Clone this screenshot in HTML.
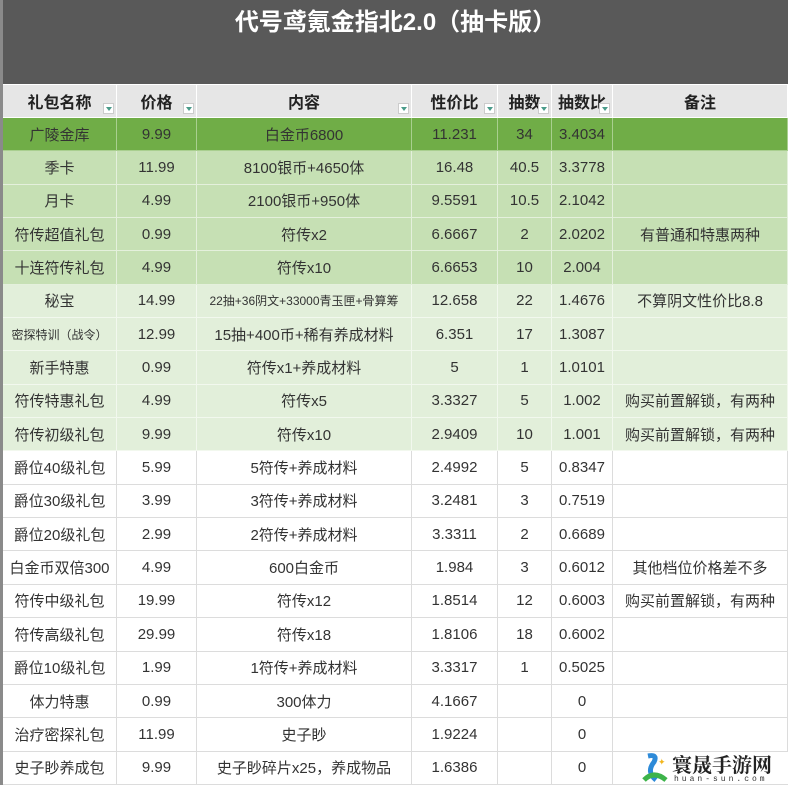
<!DOCTYPE html>
<html><head><meta charset="utf-8"><style>
*{margin:0;padding:0;box-sizing:border-box}
body{width:788px;height:784px;overflow:hidden;background:#fff;font-family:"Liberation Sans","Noto Sans CJK SC",sans-serif;position:relative}
.title{position:absolute;left:0;top:0;width:788px;height:84px;background:#595959;color:#fff;font-size:24px;font-weight:bold;text-align:center;line-height:46px;border-left:3px solid #8a8a8a}
table{position:absolute;left:0;top:84px;width:788px;border-collapse:collapse;table-layout:fixed;border-left:3px solid #8a8a8a}
td,th{border:1px solid #dcdcdc;text-align:center;font-size:15px;color:#333;white-space:nowrap;overflow:hidden;height:33.35px;padding:0;position:relative}
th{background:#e6e6e6;font-weight:bold;font-size:16px;color:#222;height:33px;border-color:#fff}
th .d{position:absolute;right:2px;bottom:3px;width:11px;height:11px;background:#fff;border:1px solid #ccc}
th .d:after{content:"";position:absolute;left:2px;top:3px;border-left:3px solid transparent;border-right:3px solid transparent;border-top:4px solid #4a9b8a}
tr.a td{background:#70ad47;border-color:#a9cf8f}
tr.b td{background:#c6e0b4;border-color:#e4f0dc}
tr.c td{background:#e2efda;border-color:#f2f8ee}
.s{font-size:12px}
.logo{position:absolute;left:640px;top:752px;width:148px;height:32px;background:#fff}
</style></head><body>
<div class="title">代号鸢氪金指北2.0（抽卡版）</div>
<table>
<colgroup><col style="width:115px"><col style="width:80px"><col style="width:215px"><col style="width:86px"><col style="width:54px"><col style="width:61px"><col></colgroup>
<tr><th>礼包名称<span class="d"></span></th><th>价格<span class="d"></span></th><th>内容<span class="d"></span></th><th>性价比<span class="d"></span></th><th>抽数<span class="d"></span></th><th>抽数比<span class="d"></span></th><th>备注</th></tr>
<tr class="a"><td>广陵金库</td><td>9.99</td><td>白金币6800</td><td>11.231</td><td>34</td><td>3.4034</td><td></td></tr>
<tr class="b"><td>季卡</td><td>11.99</td><td>8100银币+4650体</td><td>16.48</td><td>40.5</td><td>3.3778</td><td></td></tr>
<tr class="b"><td>月卡</td><td>4.99</td><td>2100银币+950体</td><td>9.5591</td><td>10.5</td><td>2.1042</td><td></td></tr>
<tr class="b"><td>符传超值礼包</td><td>0.99</td><td>符传x2</td><td>6.6667</td><td>2</td><td>2.0202</td><td>有普通和特惠两种</td></tr>
<tr class="b"><td>十连符传礼包</td><td>4.99</td><td>符传x10</td><td>6.6653</td><td>10</td><td>2.004</td><td></td></tr>
<tr class="c"><td>秘宝</td><td>14.99</td><td class="s">22抽+36阴文+33000青玉匣+骨算筹</td><td>12.658</td><td>22</td><td>1.4676</td><td>不算阴文性价比8.8</td></tr>
<tr class="c"><td class="s">密探特训（战令）</td><td>12.99</td><td>15抽+400币+稀有养成材料</td><td>6.351</td><td>17</td><td>1.3087</td><td></td></tr>
<tr class="c"><td>新手特惠</td><td>0.99</td><td>符传x1+养成材料</td><td>5</td><td>1</td><td>1.0101</td><td></td></tr>
<tr class="c"><td>符传特惠礼包</td><td>4.99</td><td>符传x5</td><td>3.3327</td><td>5</td><td>1.002</td><td>购买前置解锁，有两种</td></tr>
<tr class="c"><td>符传初级礼包</td><td>9.99</td><td>符传x10</td><td>2.9409</td><td>10</td><td>1.001</td><td>购买前置解锁，有两种</td></tr>
<tr><td>爵位40级礼包</td><td>5.99</td><td>5符传+养成材料</td><td>2.4992</td><td>5</td><td>0.8347</td><td></td></tr>
<tr><td>爵位30级礼包</td><td>3.99</td><td>3符传+养成材料</td><td>3.2481</td><td>3</td><td>0.7519</td><td></td></tr>
<tr><td>爵位20级礼包</td><td>2.99</td><td>2符传+养成材料</td><td>3.3311</td><td>2</td><td>0.6689</td><td></td></tr>
<tr><td>白金币双倍300</td><td>4.99</td><td>600白金币</td><td>1.984</td><td>3</td><td>0.6012</td><td>其他档位价格差不多</td></tr>
<tr><td>符传中级礼包</td><td>19.99</td><td>符传x12</td><td>1.8514</td><td>12</td><td>0.6003</td><td>购买前置解锁，有两种</td></tr>
<tr><td>符传高级礼包</td><td>29.99</td><td>符传x18</td><td>1.8106</td><td>18</td><td>0.6002</td><td></td></tr>
<tr><td>爵位10级礼包</td><td>1.99</td><td>1符传+养成材料</td><td>3.3317</td><td>1</td><td>0.5025</td><td></td></tr>
<tr><td>体力特惠</td><td>0.99</td><td>300体力</td><td>4.1667</td><td></td><td>0</td><td></td></tr>
<tr><td>治疗密探礼包</td><td>11.99</td><td>史子眇</td><td>1.9224</td><td></td><td>0</td><td></td></tr>
<tr><td>史子眇养成包</td><td>9.99</td><td>史子眇碎片x25，养成物品</td><td>1.6386</td><td></td><td>0</td><td></td></tr>
</table>
<div class="logo">
<svg width="30" height="32" style="position:absolute;left:0;top:0"><path d="M8 4 Q18 2 14 10 Q6 20 16 28" stroke="#2d8ad8" stroke-width="5" fill="none"/><path d="M4 28 Q14 18 26 28" stroke="#3db34a" stroke-width="5" fill="none"/><text x="18" y="13" font-size="9" fill="#f2b61d">✦</text></svg>
<div style="position:absolute;left:32px;top:0;font-size:20px;font-weight:bold;font-family:'Noto Serif CJK SC',serif;color:#222;line-height:24px">寰晟手游网</div>
<div style="position:absolute;left:34px;top:23px;font-size:8px;letter-spacing:3px;color:#333;font-family:'Liberation Mono',monospace">huan-sun.com</div>
</div>
</body></html>
